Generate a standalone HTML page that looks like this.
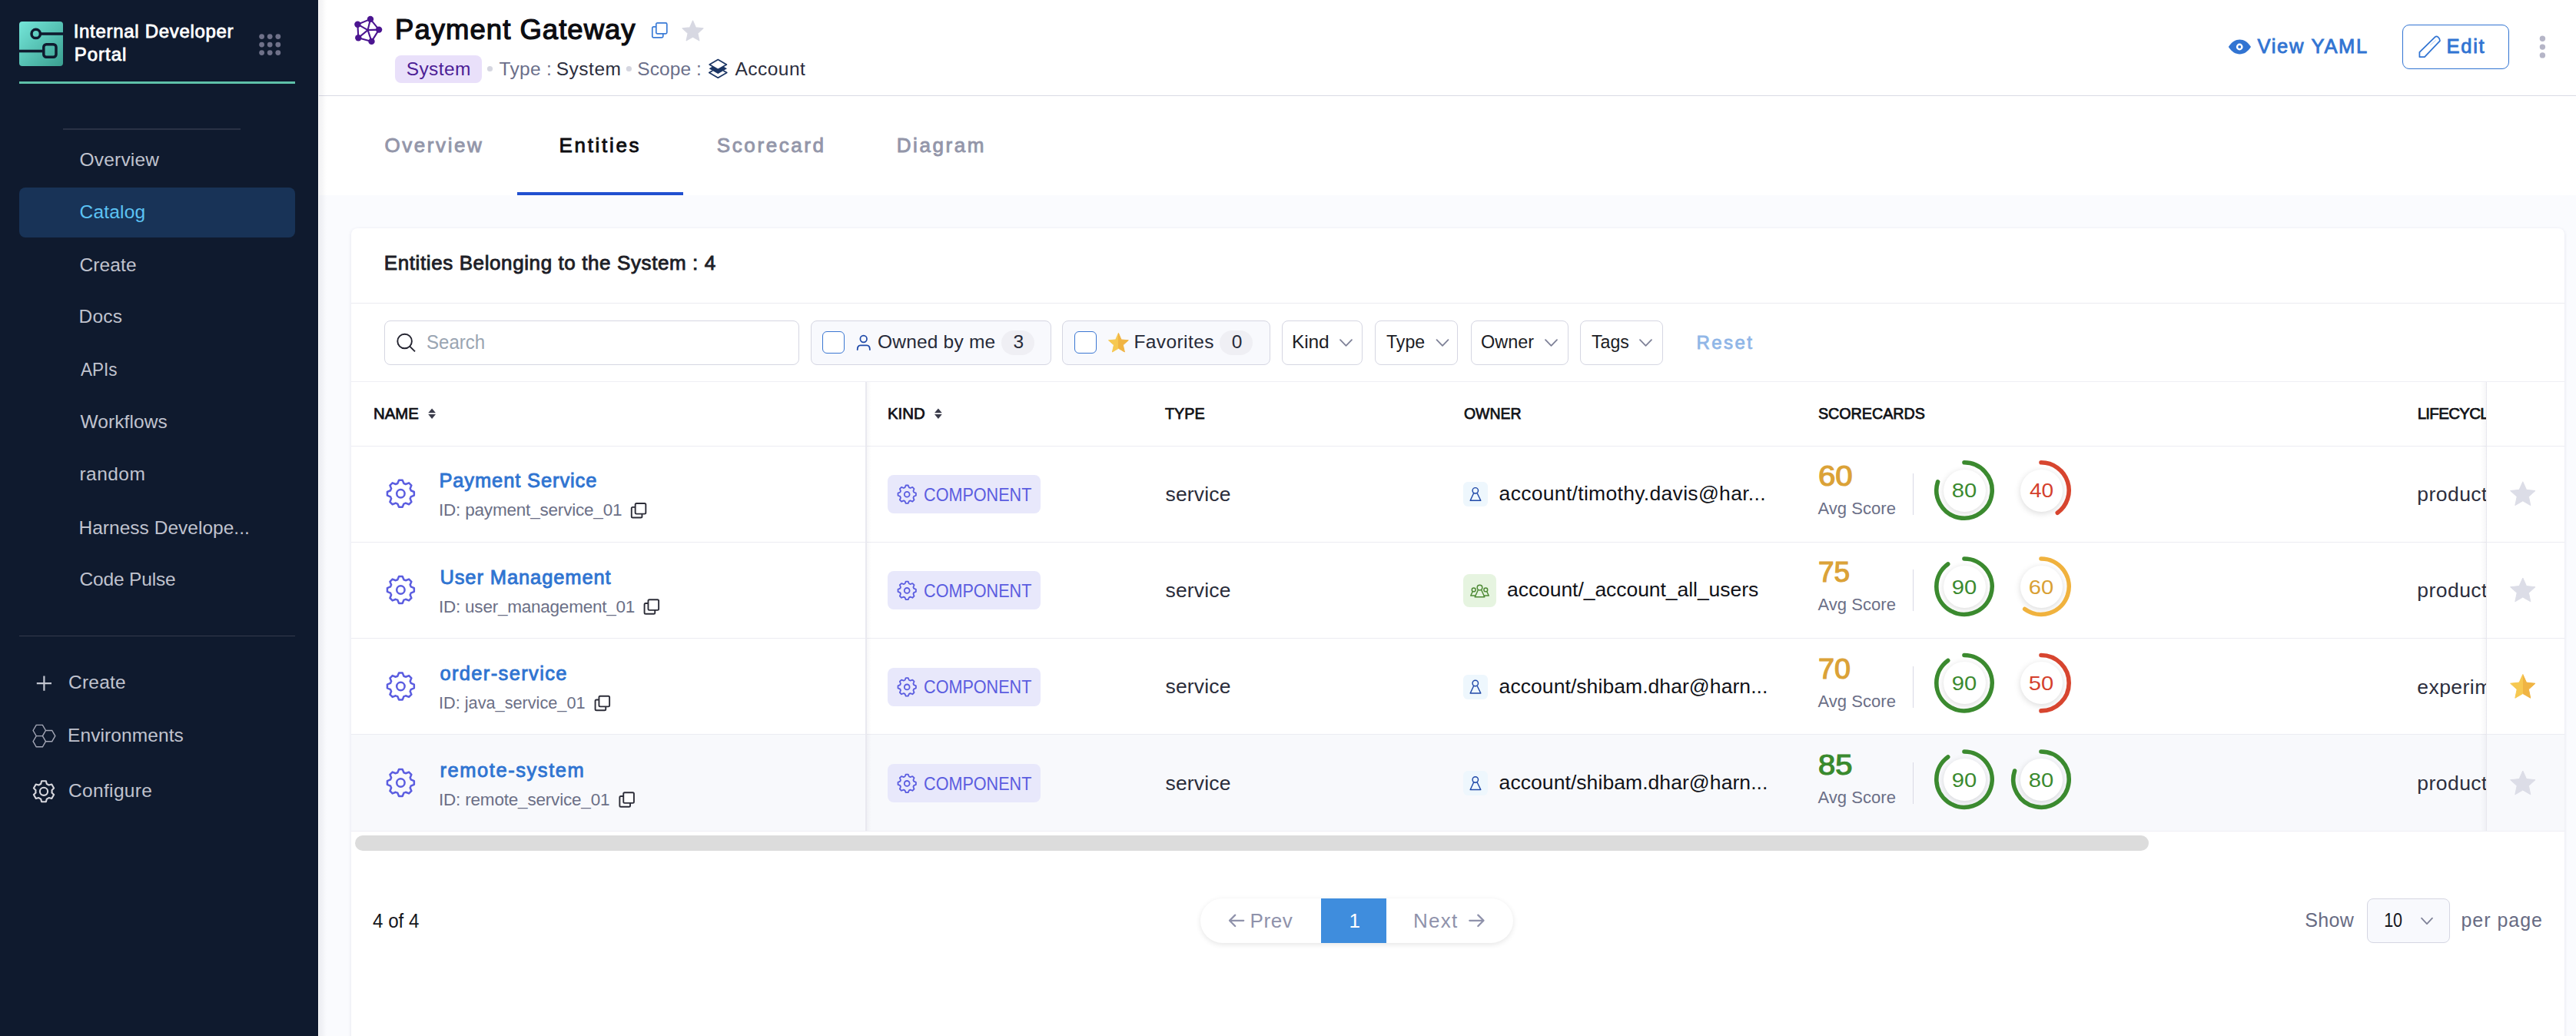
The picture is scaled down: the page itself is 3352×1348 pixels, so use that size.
<!DOCTYPE html>
<html><head><meta charset="utf-8"><title>Payment Gateway</title>
<style>
html,body{margin:0;padding:0;}
body{width:3352px;height:1348px;position:relative;overflow:hidden;background:#fafbfe;font-family:"Liberation Sans", sans-serif;}
.t{position:absolute;white-space:nowrap;}
svg{display:block;}
</style></head><body>
<div style="position:absolute;left:0px;top:0px;width:414px;height:1348px;background:#0f1a2e;border-radius:0px;"></div>
<svg style="position:absolute;left:25px;top:28px;overflow:visible;" width="57" height="58" viewBox="0 0 57 58"><defs><linearGradient id="lg" x1="0" y1="0" x2="1" y2="1"><stop offset="0" stop-color="#74e6d9"/><stop offset="1" stop-color="#3a9f90"/></linearGradient></defs>
<rect x="0" y="0" width="57" height="58" rx="4" fill="url(#lg)"/>
<circle cx="21.7" cy="15.9" r="5.7" fill="none" stroke="#0f1a2e" stroke-width="3.5"/>
<line x1="27.4" y1="16" x2="57" y2="16" stroke="#0f1a2e" stroke-width="3.6"/>
<rect x="31.8" y="29.8" width="16.2" height="16.4" rx="3.5" fill="none" stroke="#0f1a2e" stroke-width="3.5"/>
<line x1="0" y1="38.5" x2="30" y2="38.5" stroke="#0f1a2e" stroke-width="3.6"/></svg>
<div class="t" style="left:95.71px;top:29.38px;font-size:24px;line-height:24px;color:#ffffff;font-weight:400;letter-spacing:0.692px;-webkit-text-stroke:0.82px #ffffff;">Internal Developer</div>
<div class="t" style="left:96.71px;top:59.08px;font-size:24px;line-height:24px;color:#ffffff;font-weight:400;letter-spacing:1.003px;-webkit-text-stroke:0.82px #ffffff;">Portal</div>
<svg style="position:absolute;left:337px;top:44px;overflow:visible;" width="28" height="28" viewBox="0 0 28 28"><circle cx="3.6" cy="3.6" r="3.4" fill="#6f7189"/><circle cx="3.6" cy="14.1" r="3.4" fill="#6f7189"/><circle cx="3.6" cy="24.6" r="3.4" fill="#6f7189"/><circle cx="14.2" cy="3.6" r="3.4" fill="#6f7189"/><circle cx="14.2" cy="14.1" r="3.4" fill="#6f7189"/><circle cx="14.2" cy="24.6" r="3.4" fill="#6f7189"/><circle cx="24.8" cy="3.6" r="3.4" fill="#6f7189"/><circle cx="24.8" cy="14.1" r="3.4" fill="#6f7189"/><circle cx="24.8" cy="24.6" r="3.4" fill="#6f7189"/></svg>
<div style="position:absolute;left:25px;top:106px;width:359px;height:3px;background:#5ec1a9;border-radius:0px;"></div>
<div style="position:absolute;left:82px;top:167px;width:231px;height:2px;background:#2a3245;border-radius:0px;"></div>
<div style="position:absolute;left:25px;top:244px;width:359px;height:65px;background:#183357;border-radius:8px;"></div>
<div class="t" style="left:103.50px;top:195.76px;font-size:24.5px;line-height:24.5px;color:#c0c3ce;font-weight:400;letter-spacing:0.199px;">Overview</div>
<div class="t" style="left:103.50px;top:263.86px;font-size:24.5px;line-height:24.5px;color:#5cc3f4;font-weight:400;letter-spacing:0.213px;">Catalog</div>
<div class="t" style="left:103.50px;top:332.76px;font-size:24.5px;line-height:24.5px;color:#c0c3ce;font-weight:400;letter-spacing:0.118px;">Create</div>
<div class="t" style="left:102.50px;top:400.26px;font-size:24.5px;line-height:24.5px;color:#c0c3ce;font-weight:400;letter-spacing:0.244px;">Docs</div>
<div class="t" style="left:104.50px;top:468.56px;font-size:24.5px;line-height:24.5px;color:#c0c3ce;font-weight:400;letter-spacing:0.000px;transform:scaleX(0.9186);transform-origin:0.00px 0;">APIs</div>
<div class="t" style="left:104.50px;top:537.26px;font-size:24.5px;line-height:24.5px;color:#c0c3ce;font-weight:400;letter-spacing:0.089px;">Workflows</div>
<div class="t" style="left:103.50px;top:604.96px;font-size:24.5px;line-height:24.5px;color:#c0c3ce;font-weight:400;letter-spacing:0.448px;">random</div>
<div class="t" style="left:102.50px;top:674.56px;font-size:24.5px;line-height:24.5px;color:#c0c3ce;font-weight:400;letter-spacing:0.019px;">Harness Develope...</div>
<div class="t" style="left:103.50px;top:742.16px;font-size:24.5px;line-height:24.5px;color:#c0c3ce;font-weight:400;letter-spacing:-0.171px;">Code Pulse</div>
<div style="position:absolute;left:25px;top:827px;width:359px;height:1px;background:#353b4c;border-radius:0px;"></div>
<svg style="position:absolute;left:46px;top:878px;overflow:visible;" width="24" height="24" viewBox="0 0 24 24"><path d="M11.4,1.6 V20.8 M1.8,11.2 H21" stroke="#c2c5d0" stroke-width="2.2" fill="none"/></svg>
<div class="t" style="left:89.00px;top:875.96px;font-size:24.5px;line-height:24.5px;color:#c0c3ce;font-weight:400;letter-spacing:0.218px;">Create</div>
<svg style="position:absolute;left:0px;top:0px;overflow:visible;" width="1" height="1" viewBox="0 0 1 1"><path d="M59.50,950.50 L55.40,957.60 L47.20,957.60 L43.10,950.50 L47.20,943.40 L55.40,943.40 Z M71.80,957.60 L67.70,964.70 L59.50,964.70 L55.40,957.60 L59.50,950.50 L67.70,950.50 Z M59.50,964.70 L55.40,971.80 L47.20,971.80 L43.10,964.70 L47.20,957.60 L55.40,957.60 Z" fill="none" stroke="#a3a6b5" stroke-width="1.4"/></svg>
<div class="t" style="left:88.00px;top:944.66px;font-size:24.5px;line-height:24.5px;color:#c0c3ce;font-weight:400;letter-spacing:0.097px;">Environments</div>
<svg style="position:absolute;left:0px;top:0px;overflow:visible;" width="1" height="1" viewBox="0 0 1 1"><path d="M53.20,1019.90 L54.13,1016.30 L59.87,1016.30 L60.80,1019.90 A10.6,10.6 0 0 1 63.67,1021.56 L67.26,1020.57 L70.12,1025.54 L67.47,1028.14 A10.6,10.6 0 0 1 67.47,1031.46 L70.12,1034.06 L67.26,1039.03 L63.67,1038.04 A10.6,10.6 0 0 1 60.80,1039.70 L59.87,1043.30 L54.13,1043.30 L53.20,1039.70 A10.6,10.6 0 0 1 50.33,1038.04 L46.74,1039.03 L43.88,1034.06 L46.53,1031.46 A10.6,10.6 0 0 1 46.53,1028.14 L43.88,1025.54 L46.74,1020.57 L50.33,1021.56 A10.6,10.6 0 0 1 53.20,1019.90 Z" fill="none" stroke="#d8d8de" stroke-width="2.1" stroke-linejoin="round"/><circle cx="57" cy="1029.8" r="5.1" fill="none" stroke="#d8d8de" stroke-width="2.1"/></svg>
<div class="t" style="left:89.00px;top:1017.06px;font-size:24.5px;line-height:24.5px;color:#c0c3ce;font-weight:400;letter-spacing:0.337px;">Configure</div>
<div style="position:absolute;left:414px;top:0px;width:2938px;height:254px;background:#ffffff;border-radius:0px;"></div>
<div style="position:absolute;left:414px;top:124px;width:2938px;height:1px;background:#d9dae4;border-radius:0px;"></div>
<svg style="position:absolute;left:0px;top:0px;overflow:visible;" width="1" height="1" viewBox="0 0 1 1"><g stroke="#4b1590" stroke-width="2.1"><line x1="482.0" y1="24.9" x2="493.1" y2="38.6"/><line x1="493.1" y1="38.6" x2="483.5" y2="53.9"/><line x1="483.5" y1="53.9" x2="466.3" y2="49.3"/><line x1="466.3" y1="49.3" x2="465.4" y2="31.7"/><line x1="465.4" y1="31.7" x2="482.0" y2="24.9"/><line x1="478.6" y1="39.1" x2="482.0" y2="24.9"/><line x1="478.6" y1="39.1" x2="465.4" y2="31.7"/><line x1="478.6" y1="39.1" x2="493.1" y2="38.6"/><line x1="478.6" y1="39.1" x2="466.3" y2="49.3"/><line x1="478.6" y1="39.1" x2="483.5" y2="53.9"/></g><g fill="#4b1590"><circle cx="482.0" cy="24.9" r="4.2"/><circle cx="465.4" cy="31.7" r="4.2"/><circle cx="493.1" cy="38.6" r="4.2"/><circle cx="466.3" cy="49.3" r="4.2"/><circle cx="483.5" cy="53.9" r="4.2"/></g></svg>
<div class="t" style="left:514.12px;top:21.10px;font-size:36.5px;line-height:36.5px;color:#0c0c10;font-weight:400;letter-spacing:1.021px;-webkit-text-stroke:1.24px #0c0c10;">Payment Gateway</div>
<svg style="position:absolute;left:0px;top:0px;overflow:visible;" width="1" height="1" viewBox="0 0 1 1"><g transform="translate(847.8,28.8) scale(1.0)" fill="#fff" stroke="#3a7bd6" stroke-width="1.70"><rect x="1" y="6" width="14" height="14" rx="1.6"/><rect x="6" y="1" width="14" height="14" rx="1.6"/></g></svg>
<svg style="position:absolute;left:0px;top:0px;overflow:visible;" width="1" height="1" viewBox="0 0 1 1"><path d="M901.50,27.10 L905.42,35.90 L915.01,36.91 L907.85,43.36 L909.85,52.79 L901.50,47.97 L893.15,52.79 L895.15,43.36 L887.99,36.91 L897.58,35.90 Z" fill="#d7d8e2" stroke="#d7d8e2" stroke-width="1.2" stroke-linejoin="round"/></svg>
<div style="position:absolute;left:514px;top:72px;width:113px;height:36px;background:#e9e0fa;border-radius:8px;"></div>
<div class="t" style="left:528.70px;top:78.06px;font-size:24.5px;line-height:24.5px;color:#4c1d95;font-weight:400;letter-spacing:0.405px;">System</div>
<svg style="position:absolute;left:0px;top:0px;overflow:visible;" width="1" height="1" viewBox="0 0 1 1"><circle cx="637.5" cy="89.5" r="3.6" fill="#d5d6e0"/><circle cx="818.4" cy="89.5" r="3.6" fill="#d5d6e0"/></svg>
<div class="t" style="left:649.50px;top:78.06px;font-size:24.5px;line-height:24.5px;color:#6b6f8a;font-weight:400;letter-spacing:0.316px;">Type :</div>
<div class="t" style="left:723.80px;top:78.06px;font-size:24.5px;line-height:24.5px;color:#2b2d3c;font-weight:400;letter-spacing:0.485px;">System</div>
<div class="t" style="left:829.30px;top:78.06px;font-size:24.5px;line-height:24.5px;color:#6b6f8a;font-weight:400;letter-spacing:0.071px;">Scope :</div>
<svg style="position:absolute;left:0px;top:0px;overflow:visible;" width="1" height="1" viewBox="0 0 1 1"><path d="M923.2,84 L934.3,77.6 L945.4,84 L934.3,90.4 Z" fill="none" stroke="#1b3564" stroke-width="1.7" stroke-linejoin="round"/><path d="M922.6,89.3 L927.3,86.5 L934.3,90.6 L941.3,86.5 L946,89.3 L934.3,96.1 Z" fill="#1b3564"/><path d="M927.3,91.9 L922.8,94.5 L934.3,101.2 L945.8,94.5 L941.3,91.9" fill="none" stroke="#1b3564" stroke-width="1.7" stroke-linejoin="round"/></svg>
<div class="t" style="left:956.40px;top:78.06px;font-size:24.5px;line-height:24.5px;color:#2b2d3c;font-weight:400;letter-spacing:0.480px;">Account</div>
<svg style="position:absolute;left:0px;top:0px;overflow:visible;" width="1" height="1" viewBox="0 0 1 1"><path d="M2899.8,61 C2904,54.5 2909,51.6 2914.4,51.6 C2919.8,51.6 2924.8,54.5 2929,61 C2924.8,67.5 2919.8,70.4 2914.4,70.4 C2909,70.4 2904,67.5 2899.8,61 Z" fill="#3174d2"/><circle cx="2914.2" cy="61" r="4.4" fill="#fff"/><circle cx="2914.2" cy="61" r="2" fill="#3174d2"/></svg>
<div class="t" style="left:2937.43px;top:48.21px;font-size:25.5px;line-height:25.5px;color:#3174d2;font-weight:400;letter-spacing:1.734px;-webkit-text-stroke:0.87px #3174d2;">View YAML</div>
<div style="position:absolute;left:3126px;top:32px;width:139px;height:58px;background:#fff;border:1.6px solid #3174d2;border-radius:9px;box-sizing:border-box;"></div>
<svg style="position:absolute;left:0px;top:0px;overflow:visible;" width="1" height="1" viewBox="0 0 1 1"><path d="M3148.4,74.1 L3148.4,67.9 L3168.6,48.2 C3169.6,47.3 3171.2,47.2 3172.4,48.1 C3173.9,49.3 3174.9,51 3175,53.2 L3155,74.1 Z" fill="none" stroke="#3174d2" stroke-width="1.75" stroke-linejoin="round"/><line x1="3162.4" y1="58.8" x2="3169.7" y2="52.2" stroke="#a9c6ee" stroke-width="0.9"/></svg>
<div class="t" style="left:3183.43px;top:48.21px;font-size:25.5px;line-height:25.5px;color:#3174d2;font-weight:400;letter-spacing:1.758px;-webkit-text-stroke:0.87px #3174d2;">Edit</div>
<svg style="position:absolute;left:0px;top:0px;overflow:visible;" width="1" height="1" viewBox="0 0 1 1"><circle cx="3308.4" cy="50.3" r="3.7" fill="#b5b5c7"/><circle cx="3308.4" cy="61.1" r="3.7" fill="#b5b5c7"/><circle cx="3308.4" cy="71.9" r="3.7" fill="#b5b5c7"/></svg>
<div class="t" style="left:500.44px;top:176.49px;font-size:26px;line-height:26px;color:#9396a9;font-weight:400;letter-spacing:2.577px;-webkit-text-stroke:0.88px #9396a9;">Overview</div>
<div class="t" style="left:727.44px;top:176.49px;font-size:26px;line-height:26px;color:#0d0d10;font-weight:400;letter-spacing:2.694px;-webkit-text-stroke:0.88px #0d0d10;">Entities</div>
<div class="t" style="left:932.84px;top:176.49px;font-size:26px;line-height:26px;color:#9396a9;font-weight:400;letter-spacing:2.585px;-webkit-text-stroke:0.88px #9396a9;">Scorecard</div>
<div class="t" style="left:1166.74px;top:176.49px;font-size:26px;line-height:26px;color:#9396a9;font-weight:400;letter-spacing:2.588px;-webkit-text-stroke:0.88px #9396a9;">Diagram</div>
<div style="position:absolute;left:673px;top:250px;width:216px;height:4px;background:#2150d0;border-radius:0px;"></div>
<div style="position:absolute;left:414px;top:0px;width:1px;height:1348px;background:#ffffff;border-radius:0px;"></div>
<div style="position:absolute;left:415px;top:0px;width:10px;height:1348px;background:linear-gradient(90deg, rgba(20,20,50,0.06), rgba(20,20,50,0.04) 4px, rgba(20,20,50,0.012) 8px, rgba(20,20,50,0) 10px);border-radius:0px;"></div>
<div style="position:absolute;left:457px;top:297px;width:2880px;height:1071px;background:#ffffff;border-radius:8px;box-shadow:0 1px 4px rgba(30,30,90,0.11);"></div>
<div class="t" style="left:499.74px;top:328.99px;font-size:26px;line-height:26px;color:#1d1e27;font-weight:400;letter-spacing:0.601px;-webkit-text-stroke:0.88px #1d1e27;">Entities Belonging to the System : 4</div>
<div style="position:absolute;left:457px;top:394px;width:2880px;height:1px;background:#ebebf1;border-radius:0px;"></div>
<div style="position:absolute;left:500px;top:417px;width:539.5px;height:58px;background:#fff;border:1.5px solid #d5d6e2;border-radius:8px;box-sizing:border-box;"></div>
<svg style="position:absolute;left:0px;top:0px;overflow:visible;" width="1" height="1" viewBox="0 0 1 1"><circle cx="526.6" cy="444" r="9.3" fill="none" stroke="#23232f" stroke-width="1.9"/><line x1="533.4" y1="450.9" x2="540" y2="457.4" stroke="#23232f" stroke-width="1.9"/></svg>
<div class="t" style="left:555.30px;top:432.94px;font-size:25px;line-height:25px;color:#9aa5b2;font-weight:400;letter-spacing:0.000px;transform:scaleX(0.9611);transform-origin:1.00px 0;">Search</div>
<div style="position:absolute;left:1054.5px;top:417px;width:313.0999999999999px;height:58px;background:#f8f9fd;border:1.5px solid #d5d6e2;border-radius:8px;box-sizing:border-box;"></div>
<div style="position:absolute;left:1070px;top:431px;width:29px;height:29px;background:#fff;border:1.6px solid #3b77d2;border-radius:6px;box-sizing:border-box;"></div>
<svg style="position:absolute;left:0px;top:0px;overflow:visible;" width="1" height="1" viewBox="0 0 1 1"><circle cx="1123.7" cy="441" r="4.3" fill="none" stroke="#1f4aa9" stroke-width="1.7"/><path d="M1115.7,455 C1115.7,451.2 1117,449.4 1119.6,449.4 L1128,449.4 C1130.6,449.4 1131.9,451.2 1131.9,455" fill="none" stroke="#1f4aa9" stroke-width="1.8" stroke-linecap="round"/></svg>
<div class="t" style="left:1142.00px;top:433.26px;font-size:24.5px;line-height:24.5px;color:#262a38;font-weight:400;letter-spacing:0.197px;">Owned by me</div>
<div style="position:absolute;left:1303px;top:430px;width:43px;height:32px;background:#efeff4;border-radius:16px;"></div>
<div class="t" style="left:1318.50px;top:433.26px;font-size:24.5px;line-height:24.5px;color:#262a38;font-weight:400;letter-spacing:0.000px;">3</div>
<div style="position:absolute;left:1382.4px;top:417px;width:270.1999999999998px;height:58px;background:#f8f9fd;border:1.5px solid #d5d6e2;border-radius:8px;box-sizing:border-box;"></div>
<div style="position:absolute;left:1398px;top:431px;width:29px;height:29px;background:#fff;border:1.6px solid #3b77d2;border-radius:6px;box-sizing:border-box;"></div>
<svg style="position:absolute;left:0px;top:0px;overflow:visible;" width="1" height="1" viewBox="0 0 1 1"><defs><linearGradient id="sg" x1="0" x2="1" y1="0" y2="0"><stop offset="0.5" stop-color="#f6c851"/><stop offset="0.5" stop-color="#f0b443"/></linearGradient></defs><path d="M1455.40,433.40 L1459.08,441.94 L1468.33,442.80 L1461.35,448.93 L1463.39,458.00 L1455.40,453.26 L1447.41,458.00 L1449.45,448.93 L1442.47,442.80 L1451.72,441.94 Z" fill="url(#sg)" stroke="url(#sg)" stroke-width="1" stroke-linejoin="round"/></svg>
<div class="t" style="left:1475.40px;top:433.26px;font-size:24.5px;line-height:24.5px;color:#262a38;font-weight:400;letter-spacing:0.412px;">Favorites</div>
<div style="position:absolute;left:1587.4px;top:430px;width:42.399999999999864px;height:32px;background:#efeff4;border-radius:16px;"></div>
<div class="t" style="left:1602.80px;top:433.26px;font-size:24.5px;line-height:24.5px;color:#262a38;font-weight:400;letter-spacing:0.000px;">0</div>
<div style="position:absolute;left:1667.5px;top:417px;width:105.09999999999991px;height:58px;background:#fff;border:1.5px solid #d5d6e2;border-radius:8px;box-sizing:border-box;"></div>
<div class="t" style="left:1681.00px;top:433.26px;font-size:24.5px;line-height:24.5px;color:#1b1c24;font-weight:400;letter-spacing:-0.137px;">Kind</div>
<svg style="position:absolute;left:0px;top:0px;overflow:visible;" width="1" height="1" viewBox="0 0 1 1"><path d="M1744,442.2 L1751.5,449.8 L1759,442.2" fill="none" stroke="#7e8197" stroke-width="1.8" stroke-linecap="round" stroke-linejoin="round"/></svg>
<div style="position:absolute;left:1788.6px;top:417px;width:108.90000000000009px;height:58px;background:#fff;border:1.5px solid #d5d6e2;border-radius:8px;box-sizing:border-box;"></div>
<div class="t" style="left:1804.30px;top:433.26px;font-size:24.5px;line-height:24.5px;color:#1b1c24;font-weight:400;letter-spacing:0.000px;transform:scaleX(0.9430);transform-origin:0.00px 0;">Type</div>
<svg style="position:absolute;left:0px;top:0px;overflow:visible;" width="1" height="1" viewBox="0 0 1 1"><path d="M1869.5,442.2 L1877.0,449.8 L1884.5,442.2" fill="none" stroke="#7e8197" stroke-width="1.8" stroke-linecap="round" stroke-linejoin="round"/></svg>
<div style="position:absolute;left:1913.5px;top:417px;width:127.09999999999991px;height:58px;background:#fff;border:1.5px solid #d5d6e2;border-radius:8px;box-sizing:border-box;"></div>
<div class="t" style="left:1927.40px;top:433.26px;font-size:24.5px;line-height:24.5px;color:#1b1c24;font-weight:400;letter-spacing:0.000px;transform:scaleX(0.9549);transform-origin:1.00px 0;">Owner</div>
<svg style="position:absolute;left:0px;top:0px;overflow:visible;" width="1" height="1" viewBox="0 0 1 1"><path d="M2011,442.2 L2018.5,449.8 L2026,442.2" fill="none" stroke="#7e8197" stroke-width="1.8" stroke-linecap="round" stroke-linejoin="round"/></svg>
<div style="position:absolute;left:2055.5px;top:417px;width:108.5px;height:58px;background:#fff;border:1.5px solid #d5d6e2;border-radius:8px;box-sizing:border-box;"></div>
<div class="t" style="left:2071.00px;top:433.26px;font-size:24.5px;line-height:24.5px;color:#1b1c24;font-weight:400;letter-spacing:0.000px;transform:scaleX(0.9437);transform-origin:0.00px 0;">Tags</div>
<svg style="position:absolute;left:0px;top:0px;overflow:visible;" width="1" height="1" viewBox="0 0 1 1"><path d="M2134,442.2 L2141.5,449.8 L2149,442.2" fill="none" stroke="#7e8197" stroke-width="1.8" stroke-linecap="round" stroke-linejoin="round"/></svg>
<div class="t" style="left:2207.41px;top:433.68px;font-size:24px;line-height:24px;color:#90b6e7;font-weight:400;letter-spacing:2.438px;-webkit-text-stroke:0.82px #90b6e7;">Reset</div>
<div style="position:absolute;left:457px;top:496px;width:2880px;height:1px;background:#efeff5;border-radius:0px;"></div>
<div style="position:absolute;left:457px;top:956px;width:2880px;height:125px;background:#f8f9fc;border-radius:0px;"></div>
<div style="position:absolute;left:457px;top:580px;width:2880px;height:1px;background:#ececf2;border-radius:0px;"></div>
<div style="position:absolute;left:457px;top:705px;width:2880px;height:1px;background:#ececf2;border-radius:0px;"></div>
<div style="position:absolute;left:457px;top:830px;width:2880px;height:1px;background:#ececf2;border-radius:0px;"></div>
<div style="position:absolute;left:457px;top:955px;width:2880px;height:1px;background:#ececf2;border-radius:0px;"></div>
<div style="position:absolute;left:457px;top:1081px;width:2880px;height:1px;background:#efeff5;border-radius:0px;"></div>
<div class="t" style="left:486.07px;top:527.65px;font-size:20.5px;line-height:20.5px;color:#0f1015;font-weight:400;letter-spacing:0.000px;-webkit-text-stroke:0.75px #0f1015;transform:scaleX(0.9931);transform-origin:0.62px 0;">NAME</div>
<div class="t" style="left:1154.97px;top:527.65px;font-size:20.5px;line-height:20.5px;color:#0f1015;font-weight:400;letter-spacing:0.000px;-webkit-text-stroke:0.75px #0f1015;transform:scaleX(0.9953);transform-origin:0.62px 0;">KIND</div>
<div class="t" style="left:1516.17px;top:527.65px;font-size:20.5px;line-height:20.5px;color:#0f1015;font-weight:400;letter-spacing:0.000px;-webkit-text-stroke:0.75px #0f1015;transform:scaleX(0.9661);transform-origin:-0.38px 0;">TYPE</div>
<div class="t" style="left:1905.38px;top:527.65px;font-size:20.5px;line-height:20.5px;color:#0f1015;font-weight:400;letter-spacing:0.000px;-webkit-text-stroke:0.75px #0f1015;transform:scaleX(0.9488);transform-origin:-0.38px 0;">OWNER</div>
<div class="t" style="left:2365.68px;top:527.65px;font-size:20.5px;line-height:20.5px;color:#0f1015;font-weight:400;letter-spacing:0.000px;-webkit-text-stroke:0.75px #0f1015;transform:scaleX(0.9597);transform-origin:-0.38px 0;">SCORECARDS</div>
<div class="t" style="left:3145.68px;top:527.65px;font-size:20.5px;line-height:20.5px;color:#0f1015;font-weight:400;letter-spacing:-0.700px;-webkit-text-stroke:0.75px #0f1015;width:89.3px;overflow:hidden;">LIFECYCLE</div>
<svg style="position:absolute;left:0px;top:0px;overflow:visible;" width="1" height="1" viewBox="0 0 1 1"><path d="M557.2,537.3 L562.1,531.4 L567.0,537.3 Z M557.2,539 L562.1,544.9 L567.0,539 Z" fill="#3b3c4b"/><path d="M1216,537.3 L1220.9,531.4 L1225.8,537.3 Z M1216,539 L1220.9,544.9 L1225.8,539 Z" fill="#3b3c4b"/></svg>
<div style="position:absolute;left:1126px;top:497px;width:1.5px;height:584px;background:#e9e9f0;border-radius:0px;"></div>
<div style="position:absolute;left:1127.5px;top:497px;width:6.5px;height:584px;background:linear-gradient(90deg, rgba(30,30,60,0.035), rgba(30,30,60,0));border-radius:0px;"></div>
<div style="position:absolute;left:3228px;top:497px;width:7px;height:584px;background:linear-gradient(90deg, rgba(30,30,60,0), rgba(30,30,60,0.04));border-radius:0px;"></div>
<div style="position:absolute;left:3235px;top:497px;width:1px;height:584px;background:#e8e8ef;border-radius:0px;"></div>
<svg style="position:absolute;left:0px;top:0px;overflow:visible;" width="1" height="1" viewBox="0 0 1 1"><path d="M517.34,629.01 L519.10,624.85 L523.70,624.85 L525.46,629.01 A13.9,13.9 0 0 1 527.93,630.03 L532.11,628.34 L535.36,631.59 L533.67,635.77 A13.9,13.9 0 0 1 534.69,638.24 L538.85,640.00 L538.85,644.60 L534.69,646.36 A13.9,13.9 0 0 1 533.67,648.83 L535.36,653.01 L532.11,656.26 L527.93,654.57 A13.9,13.9 0 0 1 525.46,655.59 L523.70,659.75 L519.10,659.75 L517.34,655.59 A13.9,13.9 0 0 1 514.87,654.57 L510.69,656.26 L507.44,653.01 L509.13,648.83 A13.9,13.9 0 0 1 508.11,646.36 L503.95,644.60 L503.95,640.00 L508.11,638.24 A13.9,13.9 0 0 1 509.13,635.77 L507.44,631.59 L510.69,628.34 L514.87,630.03 A13.9,13.9 0 0 1 517.34,629.01 Z" fill="none" stroke="#5b5de0" stroke-width="2.5" stroke-linejoin="round"/><circle cx="521.4" cy="642.3" r="5.2" fill="none" stroke="#5b5de0" stroke-width="2.5"/></svg>
<div class="t" style="left:571.43px;top:613.41px;font-size:25.5px;line-height:25.5px;color:#2f74d1;font-weight:400;letter-spacing:0.869px;-webkit-text-stroke:0.87px #2f74d1;">Payment Service</div>
<div class="t" style="left:571.00px;top:653.45px;font-size:22.5px;line-height:22.5px;color:#6b6f86;font-weight:400;letter-spacing:-0.196px;">ID: payment_service_01</div>
<svg style="position:absolute;left:0px;top:0px;overflow:visible;" width="1" height="1" viewBox="0 0 1 1"><g transform="translate(820.8,654) scale(0.9761904761904762)" fill="#fff" stroke="#2c2d38" stroke-width="1.95"><rect x="1" y="6" width="14" height="14" rx="1.6"/><rect x="6" y="1" width="14" height="14" rx="1.6"/></g></svg>
<div style="position:absolute;left:1155px;top:618px;width:199px;height:50px;background:#e8e8fb;border-radius:8px;"></div>
<svg style="position:absolute;left:0px;top:0px;overflow:visible;" width="1" height="1" viewBox="0 0 1 1"><path d="M1177.48,634.31 L1178.66,631.50 L1181.74,631.50 L1182.92,634.31 A9.3,9.3 0 0 1 1184.57,634.99 L1187.38,633.84 L1189.56,636.02 L1188.41,638.83 A9.3,9.3 0 0 1 1189.09,640.48 L1191.90,641.66 L1191.90,644.74 L1189.09,645.92 A9.3,9.3 0 0 1 1188.41,647.57 L1189.56,650.38 L1187.38,652.56 L1184.57,651.41 A9.3,9.3 0 0 1 1182.92,652.09 L1181.74,654.90 L1178.66,654.90 L1177.48,652.09 A9.3,9.3 0 0 1 1175.83,651.41 L1173.02,652.56 L1170.84,650.38 L1171.99,647.57 A9.3,9.3 0 0 1 1171.31,645.92 L1168.50,644.74 L1168.50,641.66 L1171.31,640.48 A9.3,9.3 0 0 1 1171.99,638.83 L1170.84,636.02 L1173.02,633.84 L1175.83,634.99 A9.3,9.3 0 0 1 1177.48,634.31 Z" fill="none" stroke="#5b5de0" stroke-width="1.8" stroke-linejoin="round"/><circle cx="1180.2" cy="643.2" r="3.4" fill="none" stroke="#5b5de0" stroke-width="1.8"/></svg>
<div class="t" style="left:1202.00px;top:632.53px;font-size:23px;line-height:23px;color:#5b5de0;font-weight:400;letter-spacing:0.000px;transform:scaleX(0.9384);transform-origin:1.00px 0;">COMPONENT</div>
<div class="t" style="left:1516.50px;top:629.57px;font-size:26.5px;line-height:26.5px;color:#2a2c3a;font-weight:400;letter-spacing:0.183px;">service</div>
<div style="position:absolute;left:1904px;top:627px;width:32px;height:32px;background:#eef7fd;border-radius:6px;"></div>
<svg style="position:absolute;left:0px;top:0px;overflow:visible;" width="1" height="1" viewBox="0 0 1 1"><g fill="none" stroke="#2049a8" stroke-width="1.45" stroke-linejoin="round"><circle cx="1919.8" cy="638.3" r="3.7"/><path d="M1917.6,641.8 L1913.2,651.3 L1926.8,651.3 L1922.2,641.8"/></g></svg>
<div class="t" style="left:1950.60px;top:629.17px;font-size:26.5px;line-height:26.5px;color:#111218;font-weight:400;letter-spacing:0.307px;">account/timothy.davis@har...</div>
<div class="t" style="left:2366.11px;top:602.13px;font-size:36px;line-height:36px;color:#dba237;font-weight:400;letter-spacing:0.000px;-webkit-text-stroke:1.22px #dba237;transform:scaleX(1.1187);transform-origin:0.39px 0;">60</div>
<div class="t" style="left:2365.40px;top:651.08px;font-size:22px;line-height:22px;color:#6b6f87;font-weight:400;letter-spacing:0.055px;">Avg Score</div>
<div style="position:absolute;left:2489px;top:616px;width:1.199999999999818px;height:54px;background:#d9d9e5;border-radius:0px;"></div>
<div style="position:absolute;left:2528.5px;top:610.5px;width:55.0px;height:55.0px;background:#fff;border-radius:27.5px;box-shadow:0 2px 9px rgba(0,0,0,0.15);"></div>
<svg style="position:absolute;left:0px;top:0px;overflow:visible;" width="1" height="1" viewBox="0 0 1 1"><path d="M2556,601.8 A36.2,36.2 0 1 1 2521.57,626.81" fill="none" stroke="#3b8a2f" stroke-width="5.6" stroke-linecap="round"/></svg>
<div class="t" style="left:2540.20px;top:626.44px;font-size:25px;line-height:25px;color:#3b8a2f;font-weight:400;letter-spacing:0.000px;transform:scaleX(1.1659);transform-origin:1.00px 0;">80</div>
<div style="position:absolute;left:2628.5px;top:610.5px;width:55.0px;height:55.0px;background:#fff;border-radius:27.5px;box-shadow:0 2px 9px rgba(0,0,0,0.15);"></div>
<svg style="position:absolute;left:0px;top:0px;overflow:visible;" width="1" height="1" viewBox="0 0 1 1"><path d="M2656,601.8 A36.2,36.2 0 0 1 2677.28,667.29" fill="none" stroke="#d7452f" stroke-width="5.6" stroke-linecap="round"/></svg>
<div class="t" style="left:2641.20px;top:626.44px;font-size:25px;line-height:25px;color:#d4402d;font-weight:400;letter-spacing:0.000px;transform:scaleX(1.1225);transform-origin:0.00px 0;">40</div>
<div class="t" style="left:3145.30px;top:630.17px;font-size:26.5px;line-height:26.5px;color:#2c2e3d;font-weight:400;letter-spacing:0.450px;width:89.7px;overflow:hidden;">production</div>
<svg style="position:absolute;left:0px;top:0px;overflow:visible;" width="1" height="1" viewBox="0 0 1 1"><path d="M3282.80,626.80 L3287.50,637.34 L3298.97,638.55 L3290.40,646.27 L3292.79,657.55 L3282.80,651.79 L3272.81,657.55 L3275.20,646.27 L3266.63,638.55 L3278.10,637.34 Z" fill="#dcdde7" stroke="#dcdde7" stroke-width="1" stroke-linejoin="round"/></svg>
<svg style="position:absolute;left:0px;top:0px;overflow:visible;" width="1" height="1" viewBox="0 0 1 1"><path d="M517.34,754.21 L519.10,750.05 L523.70,750.05 L525.46,754.21 A13.9,13.9 0 0 1 527.93,755.23 L532.11,753.54 L535.36,756.79 L533.67,760.97 A13.9,13.9 0 0 1 534.69,763.44 L538.85,765.20 L538.85,769.80 L534.69,771.56 A13.9,13.9 0 0 1 533.67,774.03 L535.36,778.21 L532.11,781.46 L527.93,779.77 A13.9,13.9 0 0 1 525.46,780.79 L523.70,784.95 L519.10,784.95 L517.34,780.79 A13.9,13.9 0 0 1 514.87,779.77 L510.69,781.46 L507.44,778.21 L509.13,774.03 A13.9,13.9 0 0 1 508.11,771.56 L503.95,769.80 L503.95,765.20 L508.11,763.44 A13.9,13.9 0 0 1 509.13,760.97 L507.44,756.79 L510.69,753.54 L514.87,755.23 A13.9,13.9 0 0 1 517.34,754.21 Z" fill="none" stroke="#5b5de0" stroke-width="2.5" stroke-linejoin="round"/><circle cx="521.4" cy="767.5" r="5.2" fill="none" stroke="#5b5de0" stroke-width="2.5"/></svg>
<div class="t" style="left:572.43px;top:738.61px;font-size:25.5px;line-height:25.5px;color:#2f74d1;font-weight:400;letter-spacing:0.889px;-webkit-text-stroke:0.87px #2f74d1;">User Management</div>
<div class="t" style="left:571.00px;top:778.65px;font-size:22.5px;line-height:22.5px;color:#6b6f86;font-weight:400;letter-spacing:-0.231px;">ID: user_management_01</div>
<svg style="position:absolute;left:0px;top:0px;overflow:visible;" width="1" height="1" viewBox="0 0 1 1"><g transform="translate(837.6,779.2) scale(0.9761904761904762)" fill="#fff" stroke="#2c2d38" stroke-width="1.95"><rect x="1" y="6" width="14" height="14" rx="1.6"/><rect x="6" y="1" width="14" height="14" rx="1.6"/></g></svg>
<div style="position:absolute;left:1155px;top:743.2px;width:199px;height:50.0px;background:#e8e8fb;border-radius:8px;"></div>
<svg style="position:absolute;left:0px;top:0px;overflow:visible;" width="1" height="1" viewBox="0 0 1 1"><path d="M1177.48,759.51 L1178.66,756.70 L1181.74,756.70 L1182.92,759.51 A9.3,9.3 0 0 1 1184.57,760.19 L1187.38,759.04 L1189.56,761.22 L1188.41,764.03 A9.3,9.3 0 0 1 1189.09,765.68 L1191.90,766.86 L1191.90,769.94 L1189.09,771.12 A9.3,9.3 0 0 1 1188.41,772.77 L1189.56,775.58 L1187.38,777.76 L1184.57,776.61 A9.3,9.3 0 0 1 1182.92,777.29 L1181.74,780.10 L1178.66,780.10 L1177.48,777.29 A9.3,9.3 0 0 1 1175.83,776.61 L1173.02,777.76 L1170.84,775.58 L1171.99,772.77 A9.3,9.3 0 0 1 1171.31,771.12 L1168.50,769.94 L1168.50,766.86 L1171.31,765.68 A9.3,9.3 0 0 1 1171.99,764.03 L1170.84,761.22 L1173.02,759.04 L1175.83,760.19 A9.3,9.3 0 0 1 1177.48,759.51 Z" fill="none" stroke="#5b5de0" stroke-width="1.8" stroke-linejoin="round"/><circle cx="1180.2" cy="768.4000000000001" r="3.4" fill="none" stroke="#5b5de0" stroke-width="1.8"/></svg>
<div class="t" style="left:1202.00px;top:757.73px;font-size:23px;line-height:23px;color:#5b5de0;font-weight:400;letter-spacing:0.000px;transform:scaleX(0.9384);transform-origin:1.00px 0;">COMPONENT</div>
<div class="t" style="left:1516.50px;top:754.77px;font-size:26.5px;line-height:26.5px;color:#2a2c3a;font-weight:400;letter-spacing:0.183px;">service</div>
<div style="position:absolute;left:1904px;top:747.2px;width:43px;height:43.0px;background:#e6f4e0;border-radius:8px;"></div>
<svg style="position:absolute;left:0px;top:0px;overflow:visible;" width="1" height="1" viewBox="0 0 1 1"><g fill="none" stroke="#4e8a35" stroke-width="1.5" stroke-linejoin="round"><circle cx="1925.5" cy="764.6" r="3.3"/><path d="M1923.3,767.8000000000001 L1919.2,776.8000000000001 L1931.8,776.8000000000001 L1927.7,767.8000000000001"/><circle cx="1917.7" cy="767.4000000000001" r="2.4"/><path d="M1916.2,769.8000000000001 L1913.8,775.0 L1920.2,775.0"/><circle cx="1933.3" cy="767.4000000000001" r="2.4"/><path d="M1934.8,769.8000000000001 L1937.2,775.0 L1930.8,775.0"/></g></svg>
<div class="t" style="left:1961.00px;top:754.37px;font-size:26.5px;line-height:26.5px;color:#111218;font-weight:400;letter-spacing:-0.055px;">account/_account_all_users</div>
<div class="t" style="left:2366.11px;top:727.33px;font-size:36px;line-height:36px;color:#dba237;font-weight:400;letter-spacing:0.000px;-webkit-text-stroke:1.22px #dba237;transform:scaleX(1.0270);transform-origin:0.39px 0;">75</div>
<div class="t" style="left:2365.40px;top:776.28px;font-size:22px;line-height:22px;color:#6b6f87;font-weight:400;letter-spacing:0.055px;">Avg Score</div>
<div style="position:absolute;left:2489px;top:741.2px;width:1.199999999999818px;height:54.0px;background:#d9d9e5;border-radius:0px;"></div>
<div style="position:absolute;left:2528.5px;top:735.7px;width:55.0px;height:55.0px;background:#fff;border-radius:27.5px;box-shadow:0 2px 9px rgba(0,0,0,0.15);"></div>
<svg style="position:absolute;left:0px;top:0px;overflow:visible;" width="1" height="1" viewBox="0 0 1 1"><path d="M2556,727.0 A36.2,36.2 0 1 1 2534.72,733.91" fill="none" stroke="#3b8a2f" stroke-width="5.6" stroke-linecap="round"/></svg>
<div class="t" style="left:2540.20px;top:751.64px;font-size:25px;line-height:25px;color:#3b8a2f;font-weight:400;letter-spacing:0.000px;transform:scaleX(1.1659);transform-origin:1.00px 0;">90</div>
<div style="position:absolute;left:2628.5px;top:735.7px;width:55.0px;height:55.0px;background:#fff;border-radius:27.5px;box-shadow:0 2px 9px rgba(0,0,0,0.15);"></div>
<svg style="position:absolute;left:0px;top:0px;overflow:visible;" width="1" height="1" viewBox="0 0 1 1"><path d="M2656,727.0 A36.2,36.2 0 1 1 2634.72,792.49" fill="none" stroke="#f0b23e" stroke-width="5.6" stroke-linecap="round"/></svg>
<div class="t" style="left:2640.20px;top:751.64px;font-size:25px;line-height:25px;color:#d9a034;font-weight:400;letter-spacing:0.000px;transform:scaleX(1.1659);transform-origin:1.00px 0;">60</div>
<div class="t" style="left:3145.30px;top:755.37px;font-size:26.5px;line-height:26.5px;color:#2c2e3d;font-weight:400;letter-spacing:0.450px;width:89.7px;overflow:hidden;">production</div>
<svg style="position:absolute;left:0px;top:0px;overflow:visible;" width="1" height="1" viewBox="0 0 1 1"><path d="M3282.80,752.00 L3287.50,762.54 L3298.97,763.75 L3290.40,771.47 L3292.79,782.75 L3282.80,776.99 L3272.81,782.75 L3275.20,771.47 L3266.63,763.75 L3278.10,762.54 Z" fill="#dcdde7" stroke="#dcdde7" stroke-width="1" stroke-linejoin="round"/></svg>
<svg style="position:absolute;left:0px;top:0px;overflow:visible;" width="1" height="1" viewBox="0 0 1 1"><path d="M517.34,879.71 L519.10,875.55 L523.70,875.55 L525.46,879.71 A13.9,13.9 0 0 1 527.93,880.73 L532.11,879.04 L535.36,882.29 L533.67,886.47 A13.9,13.9 0 0 1 534.69,888.94 L538.85,890.70 L538.85,895.30 L534.69,897.06 A13.9,13.9 0 0 1 533.67,899.53 L535.36,903.71 L532.11,906.96 L527.93,905.27 A13.9,13.9 0 0 1 525.46,906.29 L523.70,910.45 L519.10,910.45 L517.34,906.29 A13.9,13.9 0 0 1 514.87,905.27 L510.69,906.96 L507.44,903.71 L509.13,899.53 A13.9,13.9 0 0 1 508.11,897.06 L503.95,895.30 L503.95,890.70 L508.11,888.94 A13.9,13.9 0 0 1 509.13,886.47 L507.44,882.29 L510.69,879.04 L514.87,880.73 A13.9,13.9 0 0 1 517.34,879.71 Z" fill="none" stroke="#5b5de0" stroke-width="2.5" stroke-linejoin="round"/><circle cx="521.4" cy="893.0" r="5.2" fill="none" stroke="#5b5de0" stroke-width="2.5"/></svg>
<div class="t" style="left:572.43px;top:864.11px;font-size:25.5px;line-height:25.5px;color:#2f74d1;font-weight:400;letter-spacing:1.352px;-webkit-text-stroke:0.87px #2f74d1;">order-service</div>
<div class="t" style="left:571.00px;top:904.15px;font-size:22.5px;line-height:22.5px;color:#6b6f86;font-weight:400;letter-spacing:0.000px;transform:scaleX(0.9637);transform-origin:2.00px 0;">ID: java_service_01</div>
<svg style="position:absolute;left:0px;top:0px;overflow:visible;" width="1" height="1" viewBox="0 0 1 1"><g transform="translate(773.6,904.7) scale(0.9761904761904762)" fill="#fff" stroke="#2c2d38" stroke-width="1.95"><rect x="1" y="6" width="14" height="14" rx="1.6"/><rect x="6" y="1" width="14" height="14" rx="1.6"/></g></svg>
<div style="position:absolute;left:1155px;top:868.7px;width:199px;height:50.0px;background:#e8e8fb;border-radius:8px;"></div>
<svg style="position:absolute;left:0px;top:0px;overflow:visible;" width="1" height="1" viewBox="0 0 1 1"><path d="M1177.48,885.01 L1178.66,882.20 L1181.74,882.20 L1182.92,885.01 A9.3,9.3 0 0 1 1184.57,885.69 L1187.38,884.54 L1189.56,886.72 L1188.41,889.53 A9.3,9.3 0 0 1 1189.09,891.18 L1191.90,892.36 L1191.90,895.44 L1189.09,896.62 A9.3,9.3 0 0 1 1188.41,898.27 L1189.56,901.08 L1187.38,903.26 L1184.57,902.11 A9.3,9.3 0 0 1 1182.92,902.79 L1181.74,905.60 L1178.66,905.60 L1177.48,902.79 A9.3,9.3 0 0 1 1175.83,902.11 L1173.02,903.26 L1170.84,901.08 L1171.99,898.27 A9.3,9.3 0 0 1 1171.31,896.62 L1168.50,895.44 L1168.50,892.36 L1171.31,891.18 A9.3,9.3 0 0 1 1171.99,889.53 L1170.84,886.72 L1173.02,884.54 L1175.83,885.69 A9.3,9.3 0 0 1 1177.48,885.01 Z" fill="none" stroke="#5b5de0" stroke-width="1.8" stroke-linejoin="round"/><circle cx="1180.2" cy="893.9000000000001" r="3.4" fill="none" stroke="#5b5de0" stroke-width="1.8"/></svg>
<div class="t" style="left:1202.00px;top:883.23px;font-size:23px;line-height:23px;color:#5b5de0;font-weight:400;letter-spacing:0.000px;transform:scaleX(0.9384);transform-origin:1.00px 0;">COMPONENT</div>
<div class="t" style="left:1516.50px;top:880.27px;font-size:26.5px;line-height:26.5px;color:#2a2c3a;font-weight:400;letter-spacing:0.183px;">service</div>
<div style="position:absolute;left:1904px;top:877.7px;width:32px;height:32.0px;background:#eef7fd;border-radius:6px;"></div>
<svg style="position:absolute;left:0px;top:0px;overflow:visible;" width="1" height="1" viewBox="0 0 1 1"><g fill="none" stroke="#2049a8" stroke-width="1.45" stroke-linejoin="round"><circle cx="1919.8" cy="889.0" r="3.7"/><path d="M1917.6,892.5 L1913.2,902.0 L1926.8,902.0 L1922.2,892.5"/></g></svg>
<div class="t" style="left:1950.60px;top:879.87px;font-size:26.5px;line-height:26.5px;color:#111218;font-weight:400;letter-spacing:0.067px;">account/shibam.dhar@harn...</div>
<div class="t" style="left:2366.11px;top:852.83px;font-size:36px;line-height:36px;color:#dba237;font-weight:400;letter-spacing:0.000px;-webkit-text-stroke:1.22px #dba237;transform:scaleX(1.0474);transform-origin:0.39px 0;">70</div>
<div class="t" style="left:2365.40px;top:901.78px;font-size:22px;line-height:22px;color:#6b6f87;font-weight:400;letter-spacing:0.055px;">Avg Score</div>
<div style="position:absolute;left:2489px;top:866.7px;width:1.199999999999818px;height:54.0px;background:#d9d9e5;border-radius:0px;"></div>
<div style="position:absolute;left:2528.5px;top:861.2px;width:55.0px;height:55.0px;background:#fff;border-radius:27.5px;box-shadow:0 2px 9px rgba(0,0,0,0.15);"></div>
<svg style="position:absolute;left:0px;top:0px;overflow:visible;" width="1" height="1" viewBox="0 0 1 1"><path d="M2556,852.5 A36.2,36.2 0 1 1 2534.72,859.41" fill="none" stroke="#3b8a2f" stroke-width="5.6" stroke-linecap="round"/></svg>
<div class="t" style="left:2540.20px;top:877.14px;font-size:25px;line-height:25px;color:#3b8a2f;font-weight:400;letter-spacing:0.000px;transform:scaleX(1.1659);transform-origin:1.00px 0;">90</div>
<div style="position:absolute;left:2628.5px;top:861.2px;width:55.0px;height:55.0px;background:#fff;border-radius:27.5px;box-shadow:0 2px 9px rgba(0,0,0,0.15);"></div>
<svg style="position:absolute;left:0px;top:0px;overflow:visible;" width="1" height="1" viewBox="0 0 1 1"><path d="M2656,852.5 A36.2,36.2 0 0 1 2656.00,924.90" fill="none" stroke="#d7452f" stroke-width="5.6" stroke-linecap="round"/></svg>
<div class="t" style="left:2640.20px;top:877.14px;font-size:25px;line-height:25px;color:#d4402d;font-weight:400;letter-spacing:0.000px;transform:scaleX(1.1659);transform-origin:1.00px 0;">50</div>
<div class="t" style="left:3145.30px;top:880.87px;font-size:26.5px;line-height:26.5px;color:#2c2e3d;font-weight:400;letter-spacing:0.450px;width:89.7px;overflow:hidden;">experimental</div>
<svg style="position:absolute;left:0px;top:0px;overflow:visible;" width="1" height="1" viewBox="0 0 1 1"><defs><linearGradient id="sg2" x1="0" x2="1" y1="0" y2="0"><stop offset="0.5" stop-color="#f6c851"/><stop offset="0.5" stop-color="#f0b443"/></linearGradient></defs><path d="M3282.80,877.50 L3287.50,888.04 L3298.97,889.25 L3290.40,896.97 L3292.79,908.25 L3282.80,902.49 L3272.81,908.25 L3275.20,896.97 L3266.63,889.25 L3278.10,888.04 Z" fill="url(#sg2)" stroke="url(#sg2)" stroke-width="1" stroke-linejoin="round"/></svg>
<svg style="position:absolute;left:0px;top:0px;overflow:visible;" width="1" height="1" viewBox="0 0 1 1"><path d="M517.34,1005.21 L519.10,1001.05 L523.70,1001.05 L525.46,1005.21 A13.9,13.9 0 0 1 527.93,1006.23 L532.11,1004.54 L535.36,1007.79 L533.67,1011.97 A13.9,13.9 0 0 1 534.69,1014.44 L538.85,1016.20 L538.85,1020.80 L534.69,1022.56 A13.9,13.9 0 0 1 533.67,1025.03 L535.36,1029.21 L532.11,1032.46 L527.93,1030.77 A13.9,13.9 0 0 1 525.46,1031.79 L523.70,1035.95 L519.10,1035.95 L517.34,1031.79 A13.9,13.9 0 0 1 514.87,1030.77 L510.69,1032.46 L507.44,1029.21 L509.13,1025.03 A13.9,13.9 0 0 1 508.11,1022.56 L503.95,1020.80 L503.95,1016.20 L508.11,1014.44 A13.9,13.9 0 0 1 509.13,1011.97 L507.44,1007.79 L510.69,1004.54 L514.87,1006.23 A13.9,13.9 0 0 1 517.34,1005.21 Z" fill="none" stroke="#5b5de0" stroke-width="2.5" stroke-linejoin="round"/><circle cx="521.4" cy="1018.5" r="5.2" fill="none" stroke="#5b5de0" stroke-width="2.5"/></svg>
<div class="t" style="left:572.43px;top:989.61px;font-size:25.5px;line-height:25.5px;color:#2f74d1;font-weight:400;letter-spacing:1.563px;-webkit-text-stroke:0.87px #2f74d1;">remote-system</div>
<div class="t" style="left:571.00px;top:1029.65px;font-size:22.5px;line-height:22.5px;color:#6b6f86;font-weight:400;letter-spacing:-0.192px;">ID: remote_service_01</div>
<svg style="position:absolute;left:0px;top:0px;overflow:visible;" width="1" height="1" viewBox="0 0 1 1"><g transform="translate(805.4,1030.2) scale(0.9761904761904762)" fill="#fff" stroke="#2c2d38" stroke-width="1.95"><rect x="1" y="6" width="14" height="14" rx="1.6"/><rect x="6" y="1" width="14" height="14" rx="1.6"/></g></svg>
<div style="position:absolute;left:1155px;top:994.2px;width:199px;height:50.0px;background:#e8e8fb;border-radius:8px;"></div>
<svg style="position:absolute;left:0px;top:0px;overflow:visible;" width="1" height="1" viewBox="0 0 1 1"><path d="M1177.48,1010.51 L1178.66,1007.70 L1181.74,1007.70 L1182.92,1010.51 A9.3,9.3 0 0 1 1184.57,1011.19 L1187.38,1010.04 L1189.56,1012.22 L1188.41,1015.03 A9.3,9.3 0 0 1 1189.09,1016.68 L1191.90,1017.86 L1191.90,1020.94 L1189.09,1022.12 A9.3,9.3 0 0 1 1188.41,1023.77 L1189.56,1026.58 L1187.38,1028.76 L1184.57,1027.61 A9.3,9.3 0 0 1 1182.92,1028.29 L1181.74,1031.10 L1178.66,1031.10 L1177.48,1028.29 A9.3,9.3 0 0 1 1175.83,1027.61 L1173.02,1028.76 L1170.84,1026.58 L1171.99,1023.77 A9.3,9.3 0 0 1 1171.31,1022.12 L1168.50,1020.94 L1168.50,1017.86 L1171.31,1016.68 A9.3,9.3 0 0 1 1171.99,1015.03 L1170.84,1012.22 L1173.02,1010.04 L1175.83,1011.19 A9.3,9.3 0 0 1 1177.48,1010.51 Z" fill="none" stroke="#5b5de0" stroke-width="1.8" stroke-linejoin="round"/><circle cx="1180.2" cy="1019.4000000000001" r="3.4" fill="none" stroke="#5b5de0" stroke-width="1.8"/></svg>
<div class="t" style="left:1202.00px;top:1008.73px;font-size:23px;line-height:23px;color:#5b5de0;font-weight:400;letter-spacing:0.000px;transform:scaleX(0.9384);transform-origin:1.00px 0;">COMPONENT</div>
<div class="t" style="left:1516.50px;top:1005.77px;font-size:26.5px;line-height:26.5px;color:#2a2c3a;font-weight:400;letter-spacing:0.183px;">service</div>
<div style="position:absolute;left:1904px;top:1003.2px;width:32px;height:32.0px;background:#eef7fd;border-radius:6px;"></div>
<svg style="position:absolute;left:0px;top:0px;overflow:visible;" width="1" height="1" viewBox="0 0 1 1"><g fill="none" stroke="#2049a8" stroke-width="1.45" stroke-linejoin="round"><circle cx="1919.8" cy="1014.5" r="3.7"/><path d="M1917.6,1018.0 L1913.2,1027.5 L1926.8,1027.5 L1922.2,1018.0"/></g></svg>
<div class="t" style="left:1950.60px;top:1005.37px;font-size:26.5px;line-height:26.5px;color:#111218;font-weight:400;letter-spacing:0.067px;">account/shibam.dhar@harn...</div>
<div class="t" style="left:2366.11px;top:978.33px;font-size:36px;line-height:36px;color:#3a8a2e;font-weight:400;letter-spacing:0.000px;-webkit-text-stroke:1.22px #3a8a2e;transform:scaleX(1.1085);transform-origin:0.39px 0;">85</div>
<div class="t" style="left:2365.40px;top:1027.28px;font-size:22px;line-height:22px;color:#6b6f87;font-weight:400;letter-spacing:0.055px;">Avg Score</div>
<div style="position:absolute;left:2489px;top:992.2px;width:1.199999999999818px;height:54.0px;background:#d9d9e5;border-radius:0px;"></div>
<div style="position:absolute;left:2528.5px;top:986.7px;width:55.0px;height:55.0px;background:#fff;border-radius:27.5px;box-shadow:0 2px 9px rgba(0,0,0,0.15);"></div>
<svg style="position:absolute;left:0px;top:0px;overflow:visible;" width="1" height="1" viewBox="0 0 1 1"><path d="M2556,978.0 A36.2,36.2 0 1 1 2534.72,984.91" fill="none" stroke="#3b8a2f" stroke-width="5.6" stroke-linecap="round"/></svg>
<div class="t" style="left:2540.20px;top:1002.64px;font-size:25px;line-height:25px;color:#3b8a2f;font-weight:400;letter-spacing:0.000px;transform:scaleX(1.1659);transform-origin:1.00px 0;">90</div>
<div style="position:absolute;left:2628.5px;top:986.7px;width:55.0px;height:55.0px;background:#fff;border-radius:27.5px;box-shadow:0 2px 9px rgba(0,0,0,0.15);"></div>
<svg style="position:absolute;left:0px;top:0px;overflow:visible;" width="1" height="1" viewBox="0 0 1 1"><path d="M2656,978.0 A36.2,36.2 0 1 1 2621.57,1003.01" fill="none" stroke="#3b8a2f" stroke-width="5.6" stroke-linecap="round"/></svg>
<div class="t" style="left:2640.20px;top:1002.64px;font-size:25px;line-height:25px;color:#3b8a2f;font-weight:400;letter-spacing:0.000px;transform:scaleX(1.1659);transform-origin:1.00px 0;">80</div>
<div class="t" style="left:3145.30px;top:1006.37px;font-size:26.5px;line-height:26.5px;color:#2c2e3d;font-weight:400;letter-spacing:0.450px;width:89.7px;overflow:hidden;">production</div>
<svg style="position:absolute;left:0px;top:0px;overflow:visible;" width="1" height="1" viewBox="0 0 1 1"><path d="M3282.80,1003.00 L3287.50,1013.54 L3298.97,1014.75 L3290.40,1022.47 L3292.79,1033.75 L3282.80,1027.99 L3272.81,1033.75 L3275.20,1022.47 L3266.63,1014.75 L3278.10,1013.54 Z" fill="#dcdde7" stroke="#dcdde7" stroke-width="1" stroke-linejoin="round"/></svg>
<div style="position:absolute;left:462px;top:1087px;width:2334px;height:20px;background:#dcdcdc;border-radius:10px;"></div>
<div class="t" style="left:485.40px;top:1186.04px;font-size:25px;line-height:25px;color:#15161c;font-weight:400;letter-spacing:0.000px;transform:scaleX(0.9674);transform-origin:0.00px 0;">4 of 4</div>
<div style="position:absolute;left:1562px;top:1169px;width:407px;height:58px;background:#fff;border-radius:29px;box-shadow:0 2px 7px rgba(0,0,0,0.10);"></div>
<div style="position:absolute;left:1719px;top:1169px;width:85px;height:58px;background:#3f8ddd;border-radius:0px;"></div>
<svg style="position:absolute;left:0px;top:0px;overflow:visible;" width="1" height="1" viewBox="0 0 1 1"><path d="M1618.2,1197.8 H1600.4 M1607.2,1190.6 L1600,1197.8 L1607.2,1205" fill="none" stroke="#8f92ab" stroke-width="2.3" stroke-linecap="round" stroke-linejoin="round"/><path d="M1912.3,1197.8 H1930.1 M1923.3,1190.6 L1930.5,1197.8 L1923.3,1205" fill="none" stroke="#8f92ab" stroke-width="2.3" stroke-linecap="round" stroke-linejoin="round"/></svg>
<div class="t" style="left:1626.50px;top:1184.89px;font-size:26px;line-height:26px;color:#8f92ab;font-weight:400;letter-spacing:0.613px;">Prev</div>
<div class="t" style="left:1755.60px;top:1184.89px;font-size:26px;line-height:26px;color:#ffffff;font-weight:400;letter-spacing:0.000px;">1</div>
<div class="t" style="left:1839.00px;top:1184.89px;font-size:26px;line-height:26px;color:#8f92ab;font-weight:400;letter-spacing:1.255px;">Next</div>
<div class="t" style="left:2999.20px;top:1185.24px;font-size:25px;line-height:25px;color:#676b83;font-weight:400;letter-spacing:0.373px;">Show</div>
<div style="position:absolute;left:3080.4px;top:1169px;width:107.29999999999973px;height:57.5px;background:#f8f9fd;border:1.5px solid #d5d6e2;border-radius:8px;box-sizing:border-box;"></div>
<div class="t" style="left:3101.50px;top:1185.24px;font-size:25px;line-height:25px;color:#14151b;font-weight:400;letter-spacing:0.000px;transform:scaleX(0.8609);transform-origin:1.00px 0;">10</div>
<svg style="position:absolute;left:0px;top:0px;overflow:visible;" width="1" height="1" viewBox="0 0 1 1"><path d="M3151,1194.6 L3158.0,1202.1999999999998 L3165,1194.6" fill="none" stroke="#7e8197" stroke-width="1.7" stroke-linecap="round" stroke-linejoin="round"/></svg>
<div class="t" style="left:3202.50px;top:1185.24px;font-size:25px;line-height:25px;color:#676b83;font-weight:400;letter-spacing:0.959px;">per page</div>
</body></html>
